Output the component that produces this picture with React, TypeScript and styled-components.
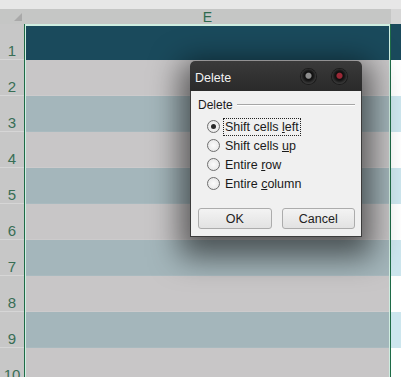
import React from "react";
import styled, { createGlobalStyle } from "styled-components";

const GlobalStyle = createGlobalStyle`
  html, body { margin: 0; padding: 0; background: #e8e8e8; }
  body { font-family: "Liberation Sans", Arial, sans-serif; }
  #root { width: 401px; height: 377px; overflow: hidden; }
`;

const Page = styled.div`
  position: relative;
  width: 401px;
  height: 377px;
  overflow: hidden;
  display: flex;
  flex-direction: column;
  background: #e8e8e8;
`;

const TopStrip = styled.div`
  height: 9px;
  flex: none;
  background: #e7e7e7;
`;

const Sheet = styled.div`
  display: grid;
  grid-template-columns: 24px 367px 1fr;
  flex: 1;
  min-height: 0;
`;

const Column = styled.div`
  display: flex;
  flex-direction: column;
  min-width: 0;
`;

const HeaderCell = styled.div<{ $light?: boolean }>`
  height: 15px;
  flex: none;
  box-sizing: border-box;
  padding-top: 1px;
  background: ${(p) => (p.$light ? "#d6d6d6" : "#c5c6c5")};
  color: #2f6b4f;
  font-size: 14px;
  line-height: 14px;
  text-align: center;
`;

const Corner = styled(HeaderCell)`
  display: flex;
  justify-content: flex-end;
  align-items: flex-end;
  padding: 0 2px 3px 0;
`;

const RowHead = styled.div`
  height: 36px;
  flex: none;
  box-sizing: border-box;
  background: #c7c7c7;
  border-bottom: 1px solid #d6d6d6;
  color: #386e55;
  font-size: 15px;
  line-height: 15px;
  display: flex;
  align-items: flex-end;
  justify-content: center;
  padding-bottom: 1px;
`;

const Selection = styled.div`
  display: flex;
  flex-direction: column;
  border-left: 1px solid #1f6b47;
  border-right: 1px solid #1f6b47;
  background: #cfeee1;
  padding: 2px 1px 0 1px;
  flex: 1;
`;

type Kind = "head" | "even" | "odd";

const ECell = styled.div<{ $kind: Kind }>`
  height: ${(p) => (p.$kind === "head" ? "34px" : "36px")};
  flex: none;
  box-sizing: border-box;
  background: ${(p) =>
    p.$kind === "head" ? "#1a4a5c" : p.$kind === "odd" ? "#a4b6bb" : "#c8c6c7"};
  border-bottom: 1px solid
    ${(p) =>
      p.$kind === "head" ? "#1a4a5c" : p.$kind === "odd" ? "#a9babf" : "#cdcbcc"};
`;

const FCell = styled.div<{ $kind: Kind }>`
  height: 36px;
  flex: none;
  box-sizing: border-box;
  background: ${(p) =>
    p.$kind === "head" ? "#1a4a5c" : p.$kind === "odd" ? "#cde6ee" : "#ffffff"};
`;

/* Dialog */
const Dialog = styled.div`
  position: absolute;
  left: 190px;
  top: 61px;
  width: 172px;
  height: 176px;
  display: flex;
  flex-direction: column;
  border-radius: 5px 5px 0 0;
  box-shadow: 0 10px 30px 10px rgba(0, 0, 0, 0.55);
`;

const TitleBar = styled.div`
  height: 30px;
  flex: none;
  box-sizing: border-box;
  display: flex;
  align-items: center;
  padding: 0 15px 0 5px;
  background: linear-gradient(#3a3a3a, #2a2a2a);
  border-radius: 5px 5px 0 0;
  color: #f2f2f2;
  font-size: 12.5px;
  gap: 16px;
`;

const TitleText = styled.span`
  flex: 1;
  padding-top: 4px;
`;

const TitleButton = styled.span<{ $color: string }>`
  width: 15px;
  height: 15px;
  border-radius: 50%;
  background: radial-gradient(
    circle at 50% 45%,
    ${(p) => p.$color} 0,
    ${(p) => p.$color} 2.5px,
    #0e0e0e 3.6px,
    #1a1a1a 5.2px,
    #363636 7.5px
  );
  box-shadow: 0 0 0 1px #1c1c1c;
`;

const Body = styled.div`
  flex: 1;
  background: #f0f0f0;
  border: 1px solid #3c3c3c;
  border-top: none;
  padding: 6px 6px 7px 6px;
  display: flex;
  flex-direction: column;
  font-size: 12px;
  color: #1a1a1a;
`;

const GroupLabel = styled.div`
  display: flex;
  align-items: center;
  gap: 4px;
  height: 15px;
  padding-left: 1px;
  &::after {
    content: "";
    flex: 1;
    height: 1px;
    background: #a6a6a6;
    box-shadow: 0 1px 0 #ffffff;
  }
`;

const Options = styled.div`
  display: flex;
  flex-direction: column;
  gap: 2px;
  padding: 6px 0 0 10px;
`;

const Option = styled.div`
  display: flex;
  align-items: center;
  gap: 3px;
  height: 17px;
`;

const Radio = styled.span<{ $checked?: boolean }>`
  width: 11px;
  height: 11px;
  border-radius: 50%;
  border: 1px solid #6f6f6f;
  background: radial-gradient(circle, #fbfbfb, #e2e2e2);
  display: flex;
  align-items: center;
  justify-content: center;
  &::after {
    content: "";
    width: 5px;
    height: 5px;
    border-radius: 50%;
    background: ${(p) => (p.$checked ? "#2a2a2a" : "transparent")};
  }
`;

const OptionText = styled.span<{ $focus?: boolean }>`
  padding: 1px 1px;
  border: 1px dotted ${(p) => (p.$focus ? "#222" : "transparent")};
  line-height: 14px;
  font-size: 12.5px;
`;

const Key = styled.span`
  text-decoration: underline;
`;

const Buttons = styled.div`
  margin-top: auto;
  display: flex;
  gap: 10px;
  padding-left: 1px;
`;

const Button = styled.div`
  width: 74px;
  height: 21px;
  box-sizing: border-box;
  border: 1px solid #acacac;
  border-radius: 3px;
  background: linear-gradient(#f3f3f3, #e2e2e2);
  display: flex;
  align-items: center;
  justify-content: center;
  font-size: 12.5px;
  color: #222;
`;

const rows: { n: number; kind: Kind }[] = Array.from({ length: 10 }, (_, i) => ({
  n: i + 1,
  kind: i === 0 ? "head" : i % 2 === 1 ? "even" : "odd",
}));

export default function App() {
  return (
    <>
      <GlobalStyle />
      <Page>
        <TopStrip />
        <Sheet>
          <Column>
            <Corner>
              <svg width="8" height="8" viewBox="0 0 8 8">
                <polygon points="8,0 8,8 0,8" fill="#a9a9a9" />
              </svg>
            </Corner>
            {rows.map((r) => (
              <RowHead key={r.n}>{r.n}</RowHead>
            ))}
          </Column>
          <Column>
            <HeaderCell>E</HeaderCell>
            <Selection>
              {rows.map((r) => (
                <ECell key={r.n} $kind={r.kind} />
              ))}
            </Selection>
          </Column>
          <Column>
            <HeaderCell $light />
            {rows.map((r) => (
              <FCell key={r.n} $kind={r.kind} />
            ))}
          </Column>
        </Sheet>

        <Dialog>
          <TitleBar>
            <TitleText>Delete</TitleText>
            <TitleButton $color="#8c8c8c" />
            <TitleButton $color="#9a2836" />
          </TitleBar>
          <Body>
            <GroupLabel>Delete</GroupLabel>
            <Options>
              <Option>
                <Radio $checked />
                <OptionText $focus>
                  Shift cells <Key>l</Key>eft
                </OptionText>
              </Option>
              <Option>
                <Radio />
                <OptionText>
                  Shift cells <Key>u</Key>p
                </OptionText>
              </Option>
              <Option>
                <Radio />
                <OptionText>
                  Entire <Key>r</Key>ow
                </OptionText>
              </Option>
              <Option>
                <Radio />
                <OptionText>
                  Entire <Key>c</Key>olumn
                </OptionText>
              </Option>
            </Options>
            <Buttons>
              <Button>OK</Button>
              <Button>Cancel</Button>
            </Buttons>
          </Body>
        </Dialog>
      </Page>
    </>
  );
}
